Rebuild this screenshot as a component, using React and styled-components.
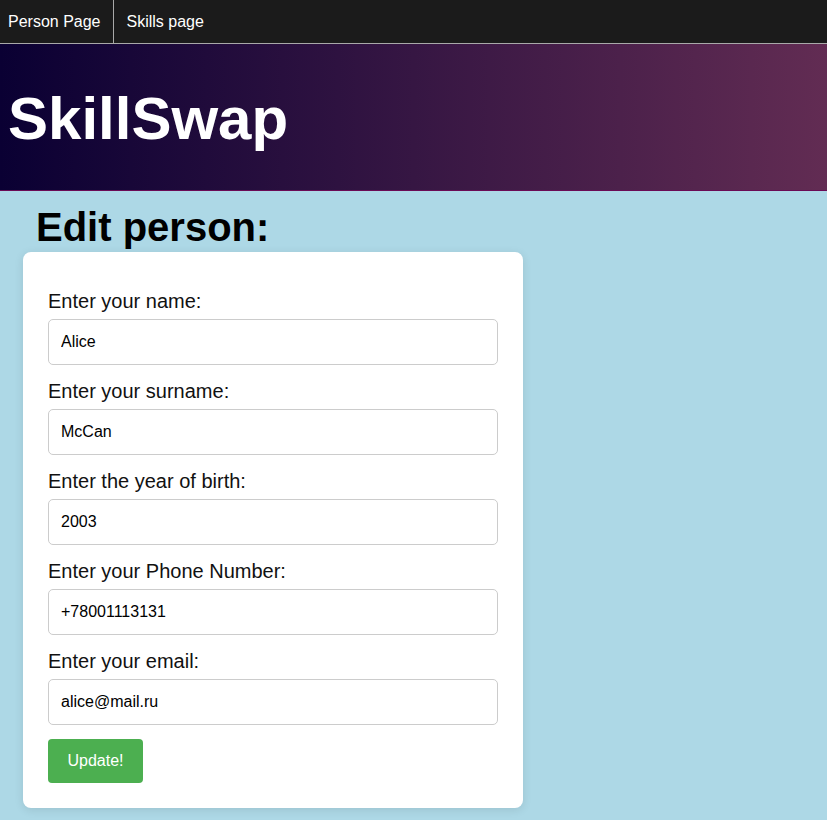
import React, { useState } from 'react';
import styled, { createGlobalStyle } from 'styled-components';

const GlobalStyle = createGlobalStyle`
    html, body {
        margin: 0;
        padding: 0;
        background: #add8e6;
        font-family: "Liberation Sans", Arial, sans-serif;
    }
`;

const StyledNav = styled.nav`
    display: flex;
    height: 43px;
    background: #1b1b1b;
    border-bottom: 1px solid #a9a9a9;
`;

const StyledNavLink = styled.a`
    display: flex;
    align-items: center;
    padding: 0 12px 0 ${props => props.first ? '8px' : '13px'};
    color: #fff;
    font-size: 16px;
    text-decoration: none;
    border-right: ${props => props.first ? '1px solid #a9a9a9' : 'none'};
    cursor: pointer;
`;

const StyledHeader = styled.header`
    background: linear-gradient(to right, #0a0033, #622c53);
    border-bottom: 1px solid #6a0a55;
`;

const StyledTitle = styled.h1`
    margin: 0;
    padding: 40px 8px 37px;
    color: #fff;
    font-size: 60px;
    line-height: 69px;
    font-weight: 700;
`;

const StyledMain = styled.main`
    padding: 13px 0 13px 23px;
`;

const StyledHeading = styled.h2`
    margin: 0 0 2px 13px;
    font-size: 40px;
    line-height: 46px;
    font-weight: 700;
    color: #000;
`;

const StyledCard = styled.form`
    width: 500px;
    box-sizing: border-box;
    padding: 38px 25px 25px;
    background: #fff;
    border-radius: 8px;
    box-shadow: 0 2px 10px rgba(0, 0, 0, 0.1);
    display: flex;
    flex-direction: column;
`;

const StyledField = styled.div`
    display: flex;
    flex-direction: column;
    gap: 6px;
    margin-bottom: ${props => props.last ? '14px' : '15px'};
`;

const StyledLabel = styled.label`
    font-size: 20px;
    line-height: 23px;
    color: #111;
`;

const StyledInput = styled.input`
    height: 46px;
    box-sizing: border-box;
    padding: 0 12px;
    border: 1px solid #ccc;
    border-radius: 5px;
    font-family: "Liberation Sans", Arial, sans-serif;
    font-size: 16px;
    color: #000;
    outline: none;
`;

const StyledButton = styled.button`
    width: 95px;
    height: 44px;
    background: #4caf50;
    color: #fff;
    border: none;
    border-radius: 4px;
    font-family: "Liberation Sans", Arial, sans-serif;
    font-size: 16px;
    cursor: pointer;
`;

const fields = [
    { key: 'name', label: 'Enter your name:', value: 'Alice' },
    { key: 'surname', label: 'Enter your surname:', value: 'McCan' },
    { key: 'year', label: 'Enter the year of birth:', value: '2003' },
    { key: 'phone', label: 'Enter your Phone Number:', value: '+78001113131' },
    { key: 'email', label: 'Enter your email:', value: 'alice@mail.ru' },
];

const App = () => {
    const [person, setPerson] = useState(
        fields.reduce((acc, f) => ({ ...acc, [f.key]: f.value }), {})
    );

    return (
        <React.Fragment>
            <GlobalStyle />
            <StyledNav>
                <StyledNavLink first>Person Page</StyledNavLink>
                <StyledNavLink>Skills page</StyledNavLink>
            </StyledNav>
            <StyledHeader>
                <StyledTitle>SkillSwap</StyledTitle>
            </StyledHeader>
            <StyledMain>
                <StyledHeading>Edit person:</StyledHeading>
                <StyledCard onSubmit={e => e.preventDefault()}>
                    {
                        fields.map((f, i) => (
                            <StyledField key={f.key} last={i === fields.length - 1}>
                                <StyledLabel htmlFor={f.key}>{f.label}</StyledLabel>
                                <StyledInput
                                    id={f.key}
                                    value={person[f.key]}
                                    onChange={e => setPerson({ ...person, [f.key]: e.target.value })}
                                />
                            </StyledField>
                        ))
                    }
                    <div>
                        <StyledButton type="submit">Update!</StyledButton>
                    </div>
                </StyledCard>
            </StyledMain>
        </React.Fragment>
    );
};

export default App;
